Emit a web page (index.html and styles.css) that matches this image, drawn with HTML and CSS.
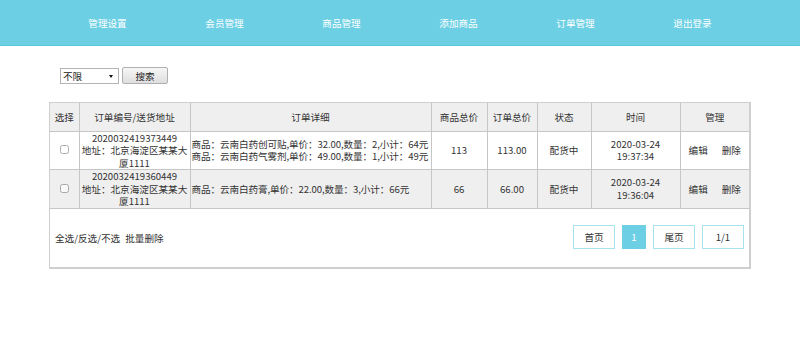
FILE: index.html
```html
<!DOCTYPE html>
<html lang="zh-CN">
<head>
<meta charset="UTF-8" />
<title>订单管理</title>
<link rel="stylesheet" href="styles.css">
</head>
<body>

<header class="topbar">
  <nav class="nav">
    <a href="#">管理设置</a>
    <a href="#">会员管理</a>
    <a href="#">商品管理</a>
    <a href="#">添加商品</a>
    <a href="#">订单管理</a>
    <a href="#">退出登录</a>
  </nav>
</header>

<main class="wrap">
  <form class="search">
    <span class="select-box">
      <select>
        <option>不限</option>
        <option>配货中</option>
        <option>已发货</option>
      </select>
    </span>
    <button type="button" class="search-btn">搜索</button>
  </form>

  <div class="panel">
    <table class="orders">
      <colgroup>
        <col style="width:29px">
        <col style="width:111px">
        <col style="width:241px">
        <col style="width:56px">
        <col style="width:50px">
        <col style="width:54px">
        <col style="width:89px">
        <col style="width:69px">
      </colgroup>
      <thead>
        <tr>
          <th>选择</th>
          <th>订单编号/送货地址</th>
          <th>订单详细</th>
          <th>商品总价</th>
          <th>订单总价</th>
          <th>状态</th>
          <th>时间</th>
          <th>管理</th>
        </tr>
      </thead>
      <tbody>
        <tr>
          <td><input type="checkbox" class="pick"></td>
          <td>2020032419373449<br>地址：北京海淀区某某大厦1111</td>
          <td class="detail">商品：云南白药创可贴,单价：32.00,数量：2,小计：64元<br>商品：云南白药气雾剂,单价：49.00,数量：1,小计：49元</td>
          <td>113</td>
          <td>113.00</td>
          <td>配货中</td>
          <td>2020-03-24<br>19:37:34</td>
          <td class="ops"><a href="#">编辑</a><a href="#">删除</a></td>
        </tr>
        <tr>
          <td><input type="checkbox" class="pick"></td>
          <td>2020032419360449<br>地址：北京海淀区某某大厦1111</td>
          <td class="detail">商品：云南白药膏,单价：22.00,数量：3,小计：66元</td>
          <td>66</td>
          <td>66.00</td>
          <td>配货中</td>
          <td>2020-03-24<br>19:36:04</td>
          <td class="ops"><a href="#">编辑</a><a href="#">删除</a></td>
        </tr>
      </tbody>
    </table>

    <div class="panel-foot">
      <div class="bulk">
        <a href="#">全选</a>/<a href="#">反选</a>/<a href="#">不选</a>
        <a href="#" class="bulk-del">批量删除</a>
      </div>
      <div class="pager">
        <a href="#" class="page">首页</a>
        <a href="#" class="page page-num current">1</a>
        <a href="#" class="page">尾页</a>
        <span class="page">1/1</span>
      </div>
    </div>
  </div>
</main>

</body>
</html>
```

FILE: styles.css
```css
body {
  margin: 0;
  font-family: "Noto Sans CJK SC", "Noto Sans", sans-serif;
  font-size: 9.6px;
  color: #333;
  background: #fff;
}
a { color: #333; text-decoration: none; }

/* Top bar */
.topbar {
  background: #6ccfe4;
  height: 45px;
  border-bottom: 1px solid #5cc5dc;
}
.nav {
  width: 702px;
  margin: 0 auto;
  display: flex;
  height: 45px;
  align-items: center;
}
.nav a {
  flex: 1;
  text-align: center;
  color: #fff;
}

.wrap {
  width: 702px;
  margin: 0 auto;
}

/* Search */
.search {
  display: flex;
  align-items: center;
  gap: 3px;
  padding: 21px 0 18px 11px;
}
.select-box {
  position: relative;
  display: inline-block;
}
.select-box select {
  appearance: none;
  -webkit-appearance: none;
  width: 59px;
  height: 16px;
  border: 1px solid #b4b4b4;
  background: #fff;
  font: inherit;
  padding: 0 0 0 2px;
  color: #222;
  outline: none;
}
.select-box::after {
  content: "";
  position: absolute;
  right: 6px;
  top: 7px;
  border-left: 2px solid transparent;
  border-right: 2px solid transparent;
  border-top: 3px solid #111;
}
.search-btn {
  width: 46px;
  height: 17px;
  border: 1px solid #b0b0b0;
  border-radius: 2px;
  background: linear-gradient(#f6f6f6, #dedede);
  font: inherit;
  color: #222;
  padding: 0;
}

/* Panel with table */
.panel {
  border: 1px solid #cfcfcf;
  border-right-width: 2px;
  border-bottom-width: 2px;
  box-sizing: border-box;
}
.orders {
  width: 100%;
  border-collapse: collapse;
  table-layout: fixed;
}
.orders th,
.orders td {
  border: 1px solid #c6c6c6;
  padding: 0;
  text-align: center;
  vertical-align: middle;
  line-height: 12.5px;
  font-weight: normal;
}
.orders tr > :first-child { border-left: none; }
.orders tr > :last-child { border-right: none; }
.orders thead th { border-top: none; }
.orders thead tr { height: 28px; background: #efefef; }
.orders tbody tr { height: 37px; }
.orders tbody tr:nth-child(2) { background: #efefef; }
.orders td.detail {
  text-align: left;
  padding-left: 1px;
  white-space: nowrap;
  letter-spacing: -0.1px;
}
.pick {
  width: 9px;
  height: 9px;
  margin: 0;
  opacity: 0.6;
}
.ops a { margin: 0 7px; }

.panel-foot {
  height: 58px;
  display: flex;
  align-items: center;
  justify-content: space-between;
  padding: 0 5px 0 5px;
}
.bulk-del { margin-left: 3px; }
.pager {
  display: flex;
  gap: 7px;
  margin-top: -2px;
}
.page {
  width: 42px;
  height: 24px;
  box-sizing: border-box;
  border: 1px solid #a8e2ee;
  display: flex;
  align-items: center;
  justify-content: center;
}
.page-num { width: 24px; }
.current {
  background: #6ccfe4;
  border-color: #6ccfe4;
  color: #fff;
}
```
